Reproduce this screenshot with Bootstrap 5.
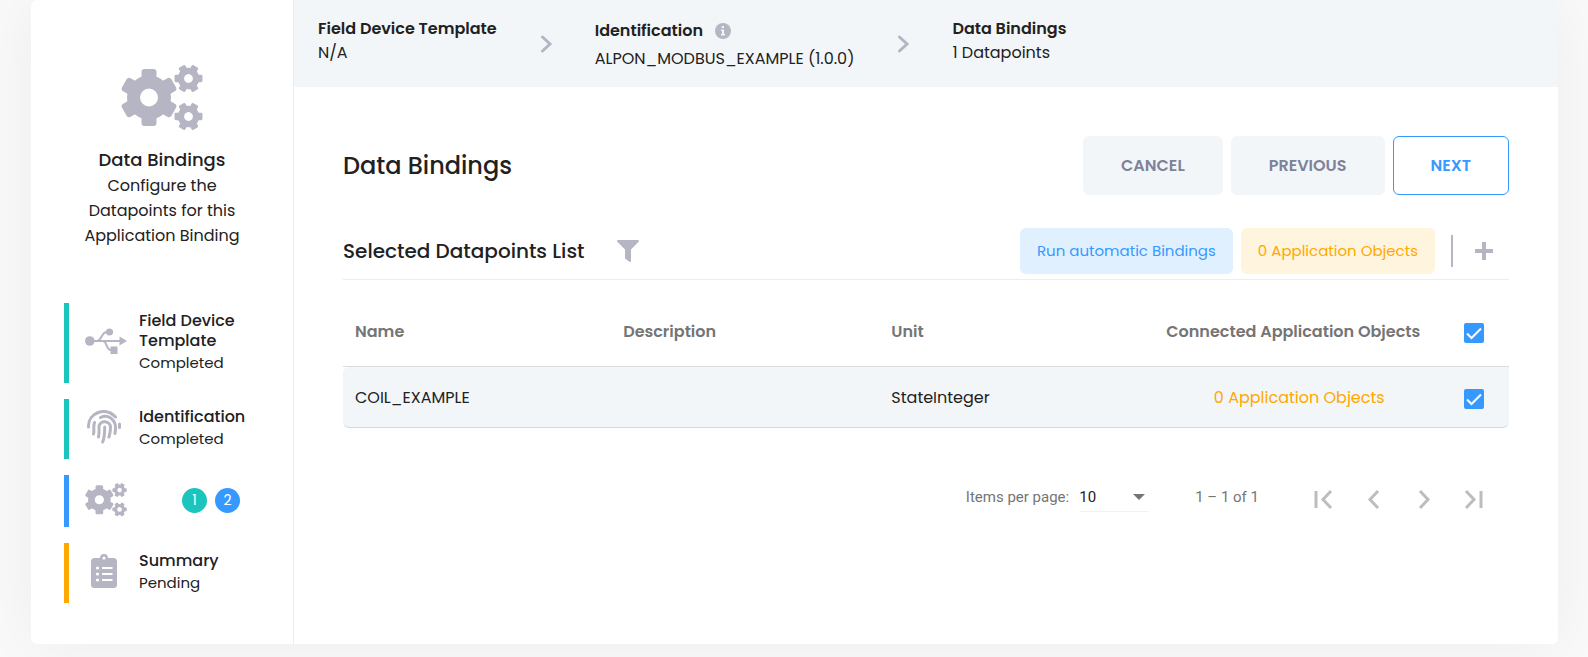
<!DOCTYPE html>
<html lang="en">
<head>
<meta charset="utf-8">
<meta name="viewport" content="width=device-width, initial-scale=1">
<title>Data Bindings</title>
<link href="https://cdn.jsdelivr.net/npm/bootstrap@5.3.0/dist/css/bootstrap.min.css" rel="stylesheet">
<style>
:root{--ink:#212121;--icon:#b5b5c3;--pale:#f3f6f9;--blue:#3699ff;--teal:#1bc5bd;--amber:#ffa800}
body{background:#f9f9f9;color:var(--ink);font-family:Poppins,Inter,sans-serif;font-size:16px;line-height:24px}
.shell{margin:0 30px 0 31px;min-height:644px;background:#fff;border-radius:6px;box-shadow:0 0 60px rgba(0,0,0,.05);overflow:hidden}
.page-wrap{overflow:hidden;padding-bottom:13px}
.side{flex:0 0 263px;border-right:1px solid #ebedf3}
.ico{fill:var(--icon);display:block;flex:none}
.intro{padding:65px 48px 0;text-align:center}
.intro h1{font-size:18px;line-height:24px;font-weight:500;margin:17px 0 0}
.intro p{font-size:16px;line-height:25px;margin:1px 0 0}
.steps{margin:55px 33px 0;gap:16px}
.step{border-left:5px solid var(--teal);padding:8px 0 8px 16px;gap:12px}
.step.now{border-color:var(--blue);padding-bottom:10px}
.step.wait{border-color:var(--amber)}
.step strong{display:block;font-weight:500;font-size:16px;line-height:20px}
.step span{display:block;font-size:15px;line-height:24px}
.step .nums{margin-right:20px}
.step .num{width:25px;height:25px;border-radius:50%;background:var(--teal);color:#fff;text-align:center;font-size:14px;line-height:25px}
.step .num.two{background:var(--blue)}
.crumbs{background:var(--pale);height:87px;padding:0 24px}
.crumbs strong{font-weight:600;display:block}
.crumbs .first-line{padding-bottom:6px}
.crumbs .mid{padding-top:2px}
.crumbs .go{margin:0 42px 0 43px}
.crumbs .info{margin-left:12px}
.main-area{padding:49px 49px 0}
h2{font-size:24px;font-weight:500;margin:0;line-height:30px}
h3{font-size:20px;font-weight:500;margin:0;line-height:30px}
.act{font-size:16px;line-height:25px;font-weight:600;padding:16px 37px;border-radius:6px;border:1px solid var(--pale);background:var(--pale);color:#7e8299}
.act.go-next{background:#fff;border-color:var(--blue);color:var(--blue)}
.soft{font-size:15px;line-height:24px;padding:11px 17px;border:0;border-radius:6px;background:#e1f0ff;color:var(--blue)}
.soft.warn{background:#fff4de;color:var(--amber)}
.bar{border-bottom:1px solid #ebedf3;padding-bottom:5px;margin-top:33px}
.rule{width:2px;height:32px;background:var(--icon);margin:0 14px 0 8px}
.plain{border:0;background:none;padding:0}
.grid-data{width:100%;margin-top:20px;table-layout:fixed;border-collapse:separate;border-spacing:0}
.grid-data th{font-weight:600;color:#757575;height:67px;padding:0 12px 2px;border-bottom:1px solid #dcdcdc}
.grid-data td{background:var(--pale);height:61px;padding:2px 12px 0;border-bottom:1px solid #d5d9dd}
.grid-data td:first-child{border-radius:6px 0 0 6px}
.grid-data td:last-child{border-radius:0 0 6px 0}
.grid-data a{color:var(--amber);text-decoration:none}
.grid-data .form-check-input{width:20px;height:20px;margin:1px auto 0;float:none;border-radius:2px;border:0;display:block;background-color:var(--blue)}
.grid-data .form-check-input:checked{background-image:url("data:image/svg+xml,%3Csvg xmlns='http://www.w3.org/2000/svg' viewBox='0 0 20 20'%3E%3Cpath fill='none' stroke='%23fff' stroke-width='2' d='m3 10.500 4.500 4.500L17 5.500'/%3E%3C/svg%3E")}
.pager{font-family:Roboto,sans-serif;font-size:15px;color:#757575;margin-top:49px;padding-right:10px}
.pager select{width:70px;border:0;border-bottom:1px solid #f3f3f3;border-radius:0;padding:0 0 2px;margin:2px 0 0 10px;font-size:15px;line-height:24px;color:var(--ink);background:url("data:image/svg+xml,%3Csvg xmlns='http://www.w3.org/2000/svg' viewBox='0 0 12 6'%3E%3Cpath fill='%23757575' d='M0 0h12L6 6z'/%3E%3C/svg%3E") no-repeat 54px 9px/12px 6px;appearance:none}
.pager .range{margin:0 40px 0 46px}
.pager svg{fill:none;stroke:#bdbdbd;stroke-width:3;display:block}
</style>
</head>
<body>
<svg width="0" height="0" class="position-absolute" aria-hidden="true">
<defs>
<g id="gear"><circle r="15.500" fill="none" stroke="#b5b5c3" stroke-width="13"/>
<g id="tooth"><rect x="-7.500" y="-28.500" width="15" height="13" rx="3"/><rect x="-7.500" y="15.500" width="15" height="13" rx="3"/></g>
<use href="#tooth" transform="rotate(60)"/><use href="#tooth" transform="rotate(120)"/></g>
<symbol id="gears" viewBox="0 0 82 66"><use href="#gear" transform="translate(28 32.500)"/><use href="#gear" transform="translate(67.500 13.500) rotate(30) scale(.49)"/><use href="#gear" transform="translate(67.500 51.500) rotate(30) scale(.49)"/></symbol>
</defs>
</svg>
<div class="page-wrap">
<div class="shell d-flex">
<aside class="side">
  <div class="intro">
    <svg class="ico mx-auto" width="82" height="66"><use href="#gears"/></svg>
    <h1>Data Bindings</h1>
    <p>Configure the Datapoints for this Application Binding</p>
  </div>
  <div class="steps d-flex flex-column">
    <div class="step d-flex align-items-center">
      <svg class="ico mb-1" width="42" height="28" viewBox="0 0 42 28"><circle cx="4.800" cy="14" r="4.800"/><circle cx="24.500" cy="5" r="3.600"/><path d="M25.500 19.500h7V27h-7zM34.500 9.500 42 14l-7.500 4.500z"/><path d="M4 14h31M12 14c5 0 4-9 10-9h3M18 14c4 0 3 9 8 9h3" fill="none" stroke="#b5b5c3" stroke-width="2"/></svg>
      <div><strong>Field Device Template</strong><span>Completed</span></div>
    </div>
    <div class="step d-flex align-items-center">
      <svg class="ico mb-1" width="42" height="34" viewBox="-2 0 42 34"><g fill="none" stroke="#b5b5c3" stroke-width="3" stroke-linecap="round"><path d="M1.500 17v-1C1.500 3 18-4 28.500 7M32.500 14v3.500M6.500 24c1-4-.5-7 1-11.500M13.500 7.500C21 4 28 9 28.500 17c0 3 0 4-.5 6.500M11.500 27c1-5 .5-7 .5-10.500 1-7 11.500-6 11.500 1 0 4-.5 6-1.500 9.500M17.700 17c0 6 0 10-2 15"/></g></svg>
      <div><strong>Identification</strong><span>Completed</span></div>
    </div>
    <div class="step now d-flex align-items-center">
      <svg class="ico" width="42" height="34"><use href="#gears"/></svg>
      <div class="nums d-flex gap-2 ms-auto"><span class="num">1</span><span class="num two">2</span></div>
    </div>
    <div class="step wait d-flex align-items-center">
      <svg class="ico mb-1" width="42" height="34" viewBox="-6 0 42 34"><path fill-rule="evenodd" d="M3.500 4H9a4 4 0 0 1 8 0h5.500A3.500 3.500 0 0 1 26 7.500v23a3.500 3.500 0 0 1-3.500 3.500h-19A3.500 3.500 0 0 1 0 30.500v-23A3.500 3.500 0 0 1 3.500 4zM13 2.500a1.600 1.600 0 1 0 0 3.200 1.600 1.600 0 0 0 0-3.200z"/><path d="M11 14h10.500M11 20h10.500M11 26h10.500" stroke="#fff" stroke-width="1.800"/><g fill="#fff"><circle cx="6.500" cy="14" r="1.600"/><circle cx="6.500" cy="20" r="1.600"/><circle cx="6.500" cy="26" r="1.600"/></g></svg>
      <div><strong>Summary</strong><span>Pending</span></div>
    </div>
  </div>
</aside>
<main class="flex-grow-1">
  <header class="crumbs d-flex align-items-center">
    <div class="first-line"><strong>Field Device Template</strong>N/A</div>
    <svg class="go" width="13" height="18" viewBox="0 0 13 18" fill="none" stroke="#b5b5c3" stroke-width="3" stroke-linecap="round"><path d="m2.500 2 7.500 7-7.500 7"/></svg>
    <div class="mid"><strong class="d-flex align-items-center mb-1">Identification <svg class="info" width="16" height="16" viewBox="0 0 16 16"><circle cx="8" cy="8" r="8" fill="#b5b5c3"/><path d="M6 6.500h3V11h1v1.500H6V11h1V8H6zM6.800 3h2.200v2H6.800z" fill="#f3f6f9"/></svg></strong>ALPON_MODBUS_EXAMPLE (1.0.0)</div>
    <svg class="go" width="13" height="18" viewBox="0 0 13 18" fill="none" stroke="#b5b5c3" stroke-width="3" stroke-linecap="round"><path d="m2.500 2 7.500 7-7.500 7"/></svg>
    <div class="first-line"><strong>Data Bindings</strong>1 Datapoints</div>
  </header>
  <div class="main-area">
    <div class="d-flex align-items-center gap-2">
      <h2 class="me-auto">Data Bindings</h2>
      <button class="act" type="button">CANCEL</button>
      <button class="act" type="button">PREVIOUS</button>
      <button class="act go-next" type="button">NEXT</button>
    </div>
    <div class="bar d-flex align-items-center gap-2">
      <h3>Selected Datapoints List</h3>
      <button class="plain ms-4 me-auto" type="button" aria-label="Filter"><svg class="ico" width="22" height="22" viewBox="0 0 22 22"><path d="M1 0h20c1 0 1.300 1 .6 1.700L14 9.500V21c0 1-.8 1.200-1.500.7L8.600 19c-.4-.3-.6-.7-.6-1.200V9.500L.4 1.700C-.3 1 0 0 1 0z"/></svg></button>
      <button class="soft" type="button">Run automatic Bindings</button>
      <button class="soft warn" type="button">0 Application Objects</button>
      <div class="rule"></div>
      <button class="plain me-3" type="button" aria-label="Add"><svg class="ico" width="18" height="20" viewBox="0 0 18 20"><path d="M7 1h4v7h7v4h-7v7H7v-7H0V8h7z"/></svg></button>
    </div>
    <table class="grid-data">
      <colgroup><col style="width:23%"><col style="width:23%"><col style="width:23%"><col style="width:25%"><col style="width:6%"></colgroup>
      <thead><tr><th>Name</th><th>Description</th><th>Unit</th><th class="text-center text-nowrap">Connected Application Objects</th><th><input class="form-check-input" type="checkbox" aria-label="Select all" checked></th></tr></thead>
      <tbody><tr><td>COIL_EXAMPLE</td><td></td><td>StateInteger</td><td class="text-center ps-4"><a href="#">0 Application Objects</a></td><td><input class="form-check-input" type="checkbox" aria-label="Select COIL_EXAMPLE" checked></td></tr></tbody>
    </table>
    <div class="pager d-flex align-items-center justify-content-end">
      <label for="pp">Items per page:</label>
      <select id="pp"><option>10</option></select>
      <span class="range">1 – 1 of 1</span>
      <div class="d-flex pt-1">
      <button class="plain" type="button" aria-label="First page"><svg width="50" height="36" viewBox="0 0 50 36"><path d="M17 10v17M32 10l-8 8.500 8 8.500"/></svg></button>
      <button class="plain" type="button" aria-label="Previous page"><svg width="50" height="36" viewBox="0 0 50 36"><path d="m29 10-8 8.500 8 8.500"/></svg></button>
      <button class="plain" type="button" aria-label="Next page"><svg width="50" height="36" viewBox="0 0 50 36"><path d="m21 10 8 8.500-8 8.500"/></svg></button>
      <button class="plain" type="button" aria-label="Last page"><svg width="50" height="36" viewBox="0 0 50 36"><path d="m17 10 8 8.500-8 8.500M32 10v17"/></svg></button>
      </div>
    </div>
  </div>
</main>
</div>
</div>
<script src="https://cdn.jsdelivr.net/npm/bootstrap@5.3.0/dist/js/bootstrap.bundle.min.js"></script>
</body>
</html>
